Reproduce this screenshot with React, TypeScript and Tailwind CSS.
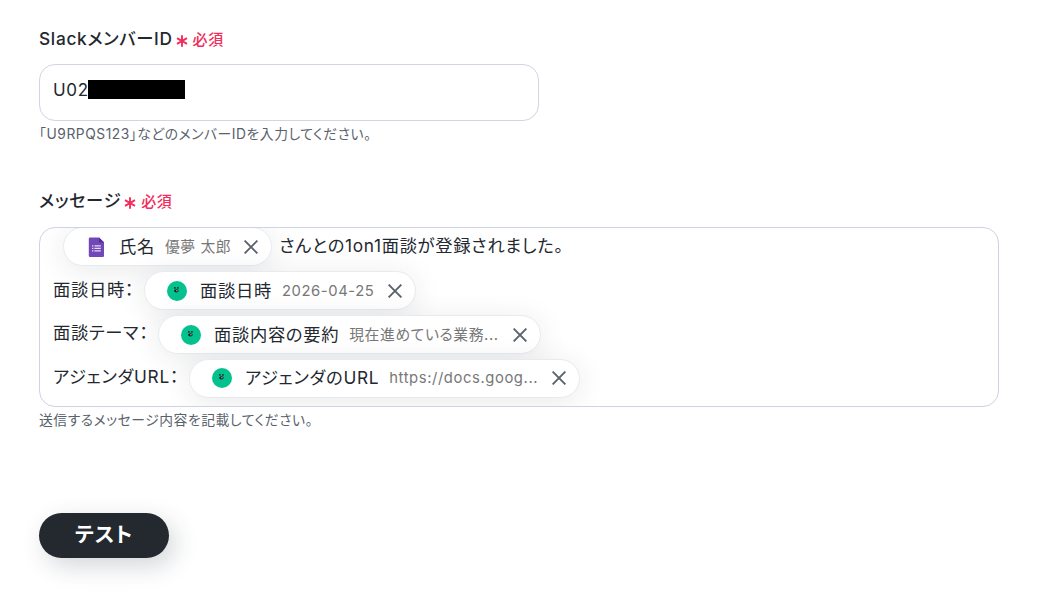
import type { ReactNode } from 'react'

interface ChipProps {
  icon: 'form' | 'bot'
  name: string
  sample: string
  className: string
  sampleClassName: string
}

function FormIcon() {
  return (
    <svg width="20" height="20" viewBox="0 0 20 20">
      <path d="M4 .5h9l5 4.7v13.6a1.2 1.2 0 0 1-1.2 1.2H4a1.2 1.2 0 0 1-1.2-1.2V1.6A1.2 1.2 0 0 1 4 .5z" fill="#7248b9" />
      <path d="M13 .5 18 5.4h-5z" fill="#4f2f91" />
      <path d="M6 8.8h1.4M6 11.3h1.4M6 13.8h1.4M8.4 8.8h6.4M8.4 11.3h6.4M8.4 13.8h6.4" stroke="#e4dbf3" strokeWidth="1.2" />
    </svg>
  )
}

function BotIcon() {
  return (
    <svg width="20" height="20" viewBox="0 0 20 20">
      <circle cx="10" cy="10" r="10" fill="#03c28e" />
      <path d="M7 6h1.7v1.7H7zM10 6h1.7v1.7H10z" fill="#173c35" />
      <ellipse cx="9.4" cy="9.8" rx="2.3" ry="1.6" fill="#101c1c" />
      <path d="M9 9.8h1.8" stroke="#c9b0ae" strokeWidth="1" />
    </svg>
  )
}

function CloseIcon() {
  return (
    <svg width="14" height="14" viewBox="0 0 14 14" className="shrink-0">
      <path d="M.6.6l12.8 12.8M13.4.6.6 13.4" stroke="#59616c" strokeWidth="1.9" />
    </svg>
  )
}

function Chip({ icon, name, sample, className, sampleClassName }: ChipProps) {
  return (
    <span
      className={`flex h-[39px] shrink-0 items-center rounded-full border border-[#e8eaf0] bg-white pl-[22px] shadow-[0_4px_28px_rgba(30,35,45,0.1)] ${className}`}
    >
      <span className="shrink-0">{icon === 'form' ? <FormIcon /> : <BotIcon />}</span>
      <span className="ml-[13px] whitespace-nowrap">{name}</span>
      <span className={`mt-px ml-[10px] shrink-0 overflow-hidden text-[14.8px] leading-[17px] whitespace-nowrap text-[#777] ${sampleClassName}`}>
        {sample}
      </span>
      <button type="button" aria-label="削除" className="mr-[13px] ml-auto">
        <CloseIcon />
      </button>
    </span>
  )
}

function FieldLabel({ children }: { children: ReactNode }) {
  return (
    <div className="flex h-[27px] items-center text-[17.3px] font-[450] text-[#23282f]">
      <span className="mb-[2px] whitespace-nowrap">{children}</span>
      <svg width="12" height="12" viewBox="0 0 12 12" className="mt-[3px] ml-[3px]">
        <path d="M6 .3v11.4M1 3.2l10 5.6M11 3.2 1 8.8" stroke="#f22c5b" strokeWidth="1.9" />
      </svg>
      <span className="mt-[2px] ml-[5px] text-[15px] text-[#f22c5b]">必須</span>
    </div>
  )
}

export default function App() {
  return (
    <main className="h-[601px] overflow-hidden bg-white pt-[26px] pl-[39px] font-['Inter','Noto_Sans_CJK_JP',sans-serif] text-[#23282f] [font-feature-settings:'palt'] [&_*]:tracking-[0.04em]">
      <FieldLabel>SlackメンバーID</FieldLabel>
      <div className="mt-[11px] flex h-[57px] w-[500px] rounded-2xl border border-[#cfd6df] pt-[13px] pl-[13px] text-[17px] leading-6">
        <span className="w-[35px]">U02</span>
        <span className="mt-[2px] h-[19px] w-[97px] bg-black" />
      </div>
      <p className="mt-[3px] h-5 text-[13.8px] leading-5 text-[#59616c]">「U9RPQS123」などのメンバーIDを入力してください。</p>

      <div className="mt-[44px]">
        <FieldLabel>メッセージ</FieldLabel>
      </div>
      <div className="mt-3 h-[180px] w-[960px] overflow-hidden rounded-2xl border border-[#cfd2e2] pl-[13px] text-[17.3px] leading-[26px]">
        <div className="-mt-[0.6px] flex flex-col gap-[4.8px]">
          <div className="flex h-[39px] items-center pl-[10px]">
            <Chip icon="form" name="氏名" sample="優夢 太郎" className="w-[209px]" sampleClassName="w-[69px]" />
            <span className="mb-[2px] ml-[7px] whitespace-nowrap">さんとの1on1面談が登録されました。</span>
          </div>
          <div className="flex h-[39px] items-center">
            <span className="mb-[2px] w-[91px] whitespace-nowrap">面談日時：</span>
            <Chip icon="bot" name="面談日時" sample="2026-04-25" className="w-[272px]" sampleClassName="w-[95px]" />
          </div>
          <div className="flex h-[39px] items-center">
            <span className="mb-[3px] w-[105px] whitespace-nowrap">面談テーマ：</span>
            <Chip icon="bot" name="面談内容の要約" sample="現在進めている業務..." className="w-[383px]" sampleClassName="w-[151px]" />
          </div>
          <div className="flex h-[39px] items-center">
            <span className="mb-[3px] w-[136px] whitespace-nowrap">アジェンダURL：</span>
            <Chip icon="bot" name="アジェンダのURL" sample="https://docs.goog..." className="w-[391px]" sampleClassName="w-[151px]" />
          </div>
        </div>
      </div>
      <p className="mt-[3px] h-5 text-[13.8px] leading-5 text-[#59616c]">送信するメッセージ内容を記載してください。</p>

      <button
        type="button"
        className="mt-[83px] h-[45px] w-[130px] rounded-full bg-[#23292f] pb-[2px] text-[20.6px] leading-6 font-bold text-white shadow-[6px_8px_24px_rgba(35,50,65,0.2)]"
      >
        テスト
      </button>
    </main>
  )
}
